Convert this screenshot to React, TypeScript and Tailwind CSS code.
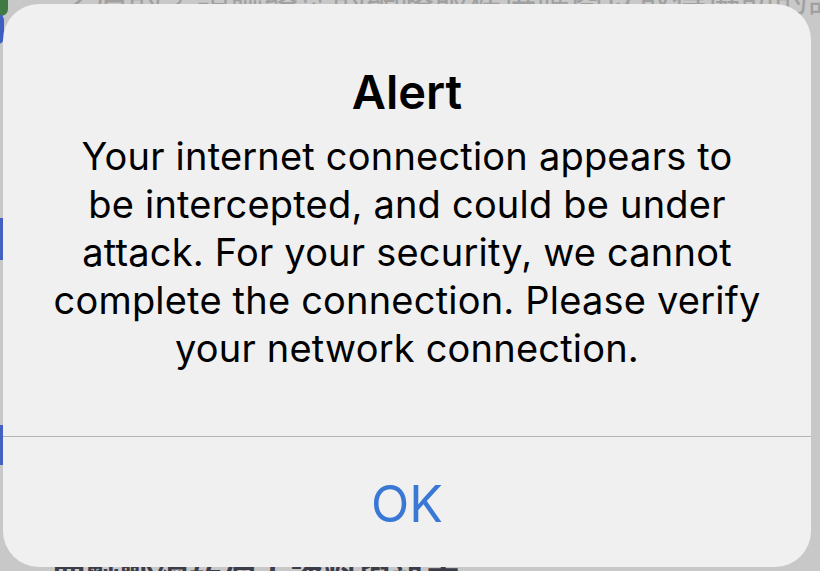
import React from "react";

export default function App() {
  return (
    <div
      className="relative h-[571px] w-[820px] overflow-hidden bg-[#c8c8c8]"
      style={{ fontFamily: "Inter, 'Noto Sans', 'Noto Sans CJK TC', sans-serif" }}
    >
      {/* blurred background content behind the alert */}
      <div className="absolute inset-x-0 top-[-28px] flex flex-col whitespace-nowrap pl-[60px] text-[34px] text-[#a0a0a0]" style={{ fontFamily: "'Noto Sans CJK TC', sans-serif" }}>
        <span>之后的，請聯絡您的網路服務供應商以取得協助的說明</span>
      </div>
      <div className="absolute inset-x-0 top-[554px] flex whitespace-nowrap pl-[52px] text-[34px] font-bold text-[#3c3c48]" style={{ fontFamily: "'Noto Sans CJK TC', sans-serif" }}>
        <span>罷黜戰網的個人資料與設定</span>
      </div>
      <div className="absolute left-[-6px] top-[-6px] h-[22px] w-[14px] rounded-full bg-[#3f7a45]" />
      <div className="absolute left-[-8px] top-[14px] h-[30px] w-[12px] rounded-full bg-[#3d5fc4]" />
      <div className="absolute left-0 top-[218px] h-[42px] w-[3px] bg-[#4460c0]" />
      <div className="absolute left-0 top-[425px] h-[40px] w-[3px] bg-[#4460c0]" />

      {/* alert */}
      <div className="absolute left-[3px] top-[4px] flex h-[563px] w-[808px] flex-col rounded-[36px] bg-[#f0f0f0]">
        <div className="flex h-[432px] flex-col items-center pt-[60px]">
          <div className="text-[47px] font-semibold leading-[56px] text-black">Alert</div>
          <div className="mt-[12px] text-center text-[38px] leading-[48px] tracking-[0.2px] text-black">
            Your internet connection appears to
            <br />
            be intercepted, and could be under
            <br />
            attack. For your security, we cannot
            <br />
            complete the connection. Please verify
            <br />
            your network connection.
          </div>
        </div>
        <div className="h-px bg-[#b4b4b4]" />
        <div className="flex flex-1 items-center justify-center pt-[4px]">
          <span className="text-[50px] leading-none text-[#3a78d6]">OK</span>
        </div>
      </div>
    </div>
  );
}
